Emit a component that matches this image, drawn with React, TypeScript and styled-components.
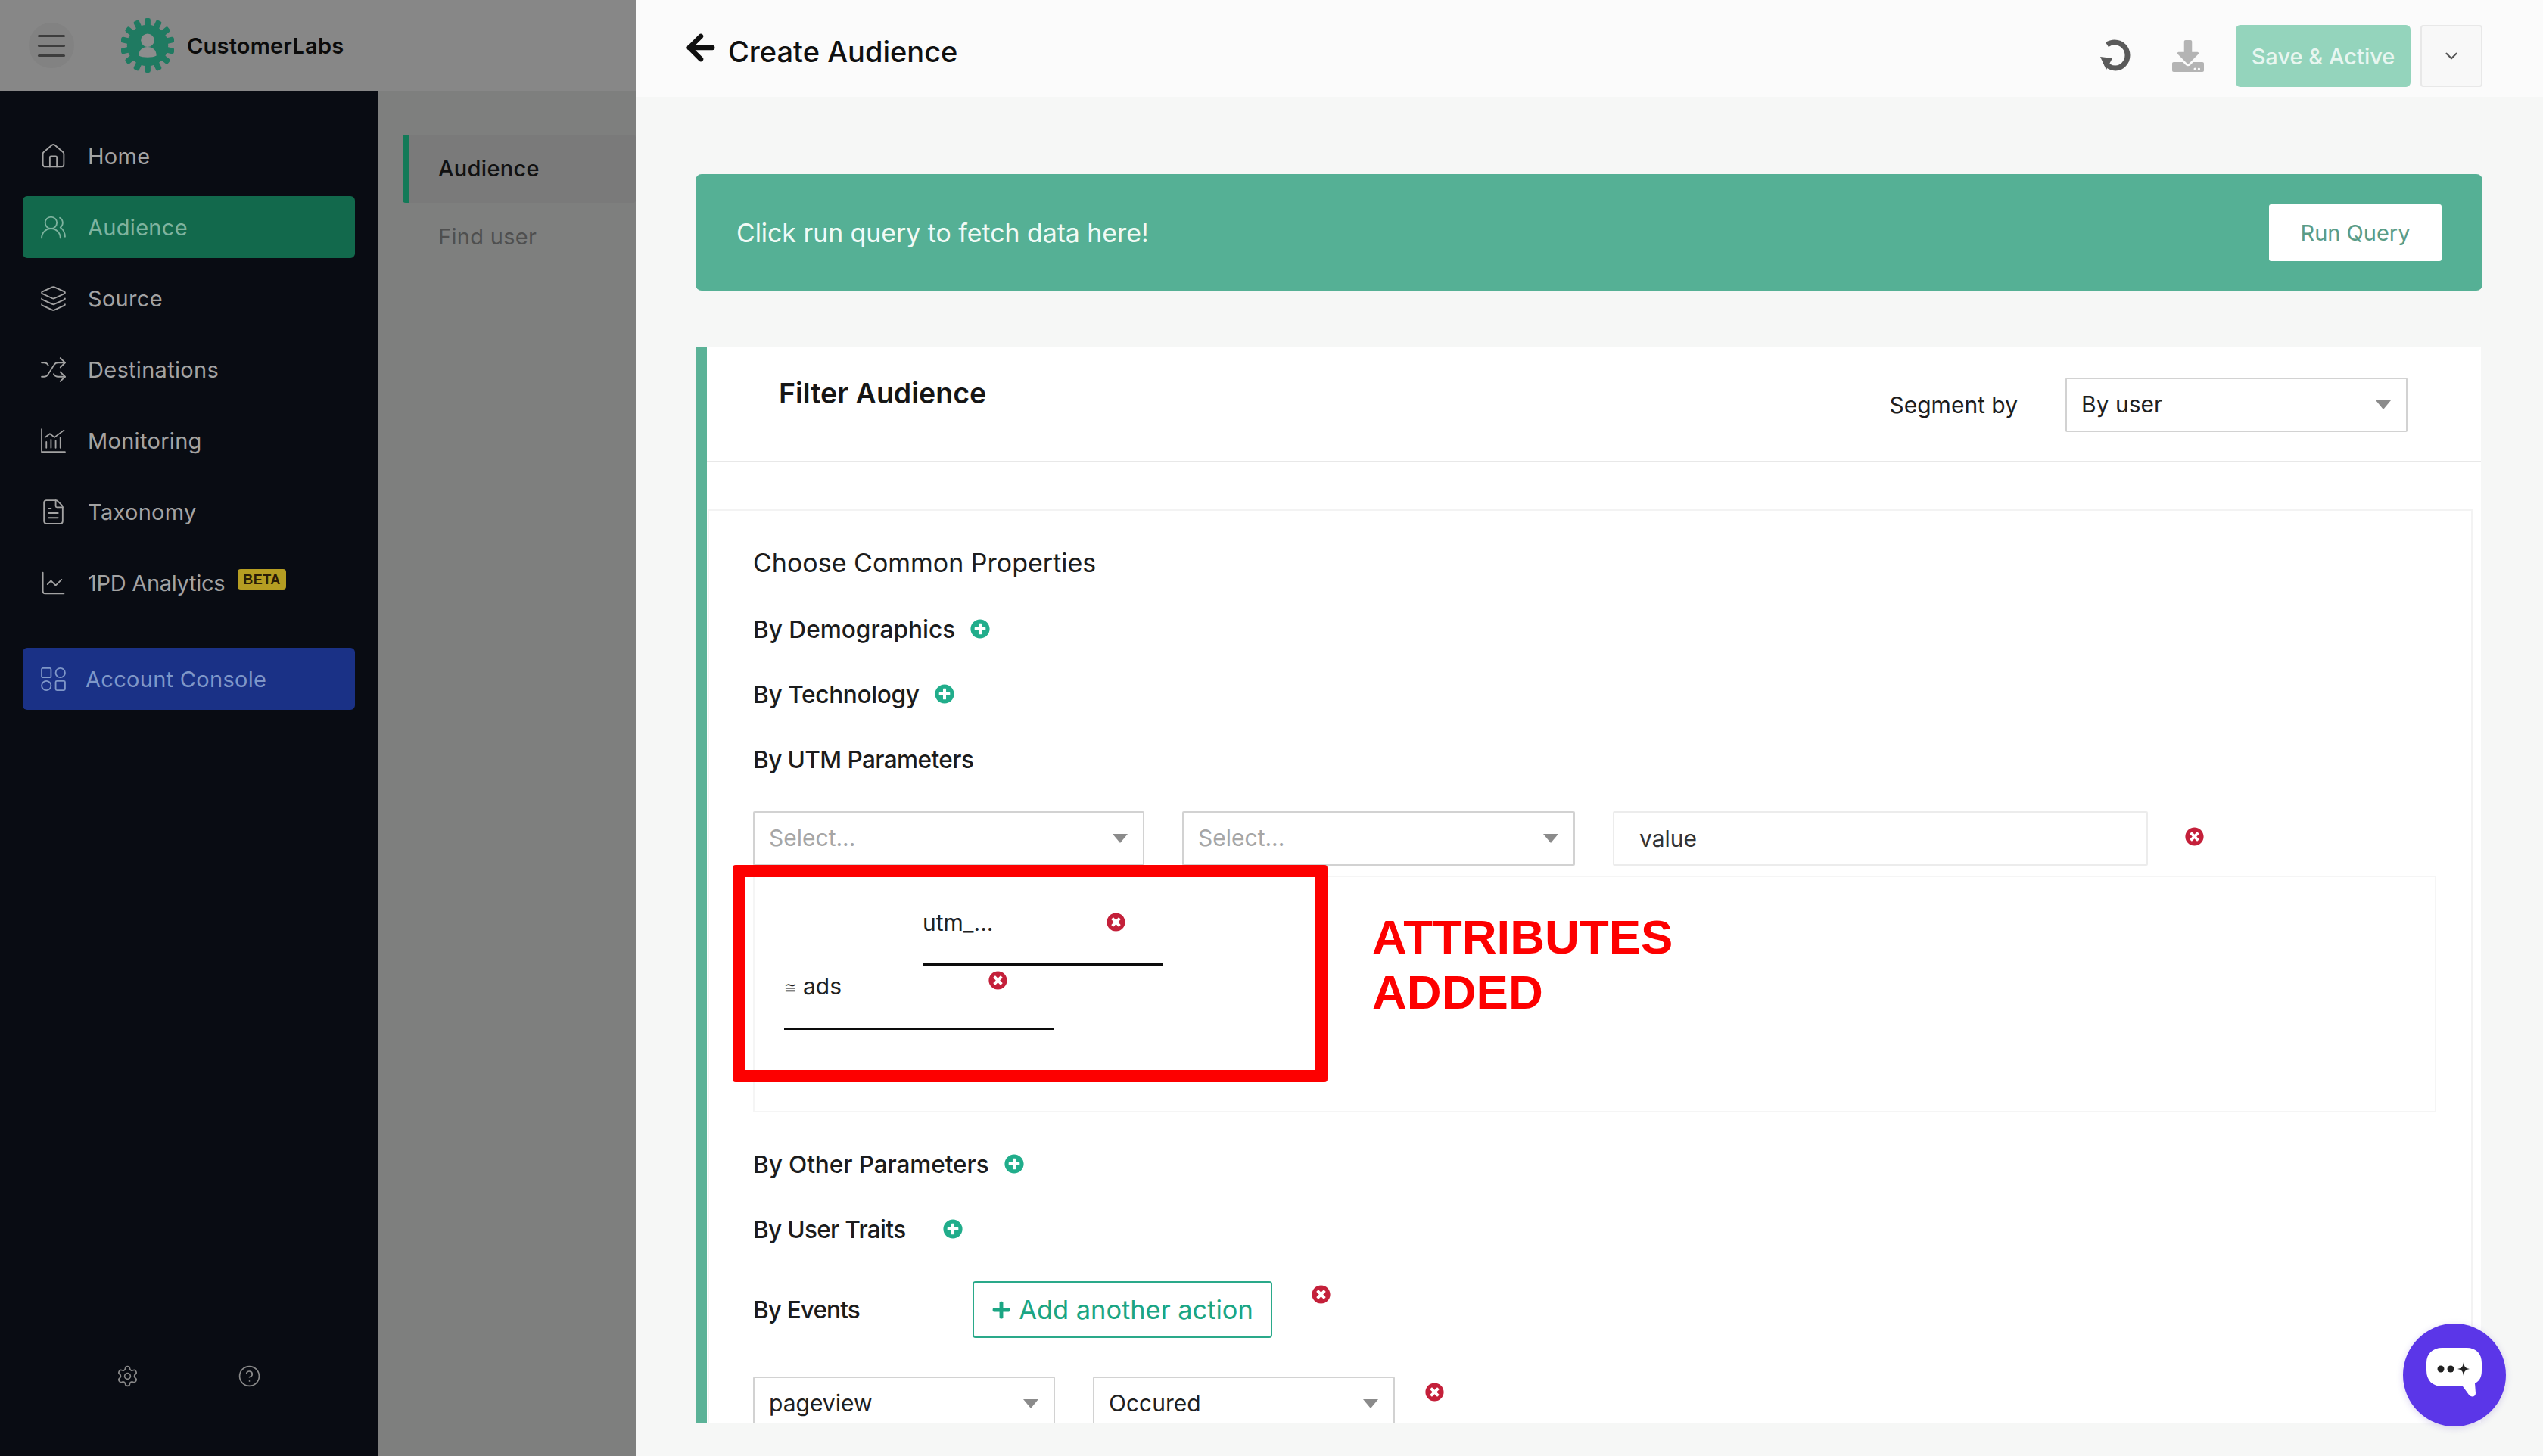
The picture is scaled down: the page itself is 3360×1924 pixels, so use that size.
import React from "react";
import styled, { createGlobalStyle } from "styled-components";
import {
  ArrowLeft,
  ChartLine,
  ChevronDown,
  CircleHelp,
  FileText,
  House,
  Layers,
  Settings,
  Shuffle,
  UsersRound,
} from "lucide-react";
import { FaDownload, FaPlus, FaPlusCircle, FaTimesCircle } from "react-icons/fa";

const GlobalStyle = createGlobalStyle`
  html, body {
    margin: 0;
    padding: 0;
    background: #f6f7f6;
    font-family: "Inter", "Noto Sans", sans-serif;
  }
  * { box-sizing: border-box; }
`;

const Page = styled.div`
  position: relative;
  display: flex;
  width: 3360px;
  height: 1924px;
  overflow: hidden;
`;

const LeftColumn = styled.div`
  display: flex;
  flex-direction: column;
  width: 840px;
  flex: none;
`;

const Brand = styled.div`
  display: flex;
  align-items: center;
  height: 120px;
  background: #878787;
  padding-left: 38px;
`;

const Hamburger = styled.div`
  display: flex;
  flex-direction: column;
  justify-content: center;
  gap: 10px;
  width: 60px;
  height: 60px;
  padding: 0 12px;
  margin-right: 62px;
  border-radius: 50%;
  background: #828282;
  span {
    display: block;
    height: 3px;
    background: #3d3d3d;
    border-radius: 2px;
  }
`;

const BrandName = styled.div`
  margin-left: 17px;
  font-size: 29px;
  font-weight: 600;
  color: #0b0b0b;
  letter-spacing: 0.2px;
`;

const LeftBody = styled.div`
  display: flex;
  flex: 1;
  min-height: 0;
`;

const Sidebar = styled.nav`
  display: flex;
  flex-direction: column;
  width: 500px;
  padding: 45px 31px 90px 30px;
  background: #090c13;
`;

const NavList = styled.div`
  display: flex;
  flex-direction: column;
  gap: 12px;
`;

const NavItem = styled.div<{ $tone?: "green" | "blue"; $topGap?: number }>`
  display: flex;
  align-items: center;
  gap: ${(p) => (p.$tone === "blue" ? 24 : 27)}px;
  height: 82px;
  padding-left: 22px;
  border-radius: 6px;
  margin-top: ${(p) => p.$topGap ?? 0}px;
  font-size: 29px;
  letter-spacing: 0.3px;
  color: ${(p) => (p.$tone === "blue" ? "#7f97c8" : p.$tone === "green" ? "#7fb39f" : "#a3a3a3")};
  background: ${(p) =>
    p.$tone === "blue" ? "#1a3186" : p.$tone === "green" ? "#12694c" : "transparent"};
  svg {
    flex: none;
    width: 37px;
    height: 37px;
    stroke-width: 1.2;
  }
`;

const TightLabel = styled.span`
  letter-spacing: -0.3px;
`;

const BetaBadge = styled.span`
  align-self: flex-start;
  margin: 23px 0 0 -10px;
  padding: 4px 7px 3px;
  border-radius: 4px;
  background: #b59d22;
  color: #2a1c06;
  font-family: "Liberation Sans", Arial, sans-serif;
  font-size: 18px;
  font-weight: 700;
  line-height: 20px;
  letter-spacing: 0.5px;
`;

const SidebarFoot = styled.div`
  display: flex;
  gap: 130px;
  margin-top: auto;
  padding-left: 123px;
  color: #8a8a8a;
  svg {
    width: 31px;
    height: 31px;
    stroke-width: 1.3;
  }
`;

const SubNav = styled.div`
  width: 340px;
  padding-top: 58px;
  background: #7e7f7e;
`;

const SubItem = styled.div<{ $active?: boolean }>`
  display: flex;
  align-items: center;
  height: 90px;
  margin-left: 32px;
  padding: 0 0 2px 39px;
  font-size: 29px;
  font-weight: ${(p) => (p.$active ? 500 : 400)};
  color: ${(p) => (p.$active ? "#111" : "#4f4f4f")};
  letter-spacing: 0.3px;
  background: ${(p) => (p.$active ? "#7a7a7a" : "transparent")};
  border-left: 8px solid ${(p) => (p.$active ? "#137a58" : "transparent")};
  border-radius: ${(p) => (p.$active ? "4px" : "0")};
`;

const Main = styled.main`
  display: flex;
  flex-direction: column;
  flex: 1;
  min-width: 0;
`;

const TopBar = styled.header`
  display: flex;
  align-items: center;
  flex: none;
  height: 128px;
  padding: 8px 80px 0 60px;
  background: #fbfbfb;
`;

const BackTitle = styled.div`
  display: flex;
  align-items: center;
  gap: 10px;
  font-size: 38px;
  font-weight: 500;
  color: #101010;
  svg {
    width: 52px;
    height: 52px;
    stroke-width: 3;
    margin-top: -10px;
  }
`;

const TopActions = styled.div`
  display: flex;
  align-items: center;
  margin-left: auto;
  margin-top: 12px;
`;

const RefreshIcon = styled.svg`
  width: 44px;
  height: 44px;
  margin-right: 53px;
`;

const DownloadIcon = styled(FaDownload)`
  width: 42px;
  height: 42px;
  margin-right: 42px;
  color: #b4b4b4;
`;

const SaveButton = styled.div`
  display: flex;
  align-items: center;
  justify-content: center;
  width: 231px;
  height: 82px;
  border-radius: 6px;
  background: #94d4bc;
  color: #e8f6f0;
  font-size: 29px;
  font-weight: 500;
`;

const CaretButton = styled.div`
  display: flex;
  align-items: center;
  justify-content: center;
  width: 82px;
  height: 82px;
  margin-left: 13px;
  border: 2px solid #e8e8e8;
  border-radius: 4px;
  color: #555;
  background: #f8f8f8;
  svg {
    width: 26px;
    height: 26px;
  }
`;

const Content = styled.div`
  flex: none;
  height: 1752px;
  padding: 102px 80px 0 79px;
  overflow: hidden;
`;

const Banner = styled.div`
  display: flex;
  align-items: center;
  justify-content: space-between;
  height: 154px;
  padding: 0 54px;
  border-radius: 8px;
  background: #55b095;
  color: #f1faf6;
  font-size: 33.8px;
`;

const RunButton = styled.div`
  display: flex;
  align-items: center;
  justify-content: center;
  width: 228px;
  height: 75px;
  border-radius: 3px;
  background: #fff;
  color: #5a9c87;
  font-size: 29px;
`;

const Card = styled.section`
  margin: 75px 2px 0 1px;
  height: 1500px;
  background: #fff;
  border-left: 14px solid #5bb297;
`;

const CardHead = styled.div`
  display: flex;
  height: 152px;
  padding: 40px 97px 0 95px;
  border-bottom: 2px solid #e8e8e8;
`;

const CardTitle = styled.h2`
  margin: 1px 0 0;
  font-size: 37.5px;
  line-height: 40px;
  font-weight: 600;
  color: #161616;
`;

const SegmentBy = styled.div`
  display: flex;
  align-items: center;
  gap: 63px;
  height: 72px;
  margin-left: auto;
  font-size: 30px;
  color: #1d1d1d;
`;

const Select = styled.div<{ $w: number; $muted?: boolean; $h?: number }>`
  position: relative;
  display: flex;
  align-items: center;
  flex: none;
  width: ${(p) => p.$w}px;
  height: ${(p) => p.$h ?? 72}px;
  padding: 0 19px 2px;
  border: 2px solid #d2d2d2;
  border-radius: 2px;
  background: #fff;
  font-size: 30px;
  color: ${(p) => (p.$muted ? "#a6a6a6" : "#1f1f1f")};
  &::after {
    content: "";
    position: absolute;
    right: 20px;
    top: 50%;
    margin-top: -6px;
    border-left: 10px solid transparent;
    border-right: 10px solid transparent;
    border-top: 12px solid #8b8b8b;
  }
`;

const ValueInput = styled.div`
  display: flex;
  align-items: center;
  width: 707px;
  height: 72px;
  padding-left: 33px;
  border: 2px solid #ececec;
  border-radius: 2px;
  font-size: 30px;
  color: #333;
`;

const Properties = styled.div`
  margin: 62px 11px 0 1px;
  height: 1300px;
  padding: 27px 46px 0 58px;
  border: 2px solid #f3f3f3;
  border-bottom: 0;
`;

const SectionTitle = styled.div`
  height: 86px;
  font-size: 34px;
  line-height: 84px;
  color: #1d1d1d;
`;

const GroupRow = styled.div<{ $gap: number; $track?: number }>`
  display: flex;
  align-items: center;
  gap: ${(p) => p.$gap}px;
  height: 86px;
  font-size: 31.6px;
  font-weight: 500;
  letter-spacing: ${(p) => p.$track ?? 0}px;
  color: #1c1c1c;
`;

const PlusIcon = styled(FaPlusCircle)`
  width: 26px;
  height: 26px;
  color: #21ad8b;
`;

const RemoveIcon = styled(FaTimesCircle)`
  flex: none;
  width: 25px;
  height: 25px;
  color: #c4203a;
`;

const FieldRow = styled.div<{ $gap: number; $top: number }>`
  display: flex;
  align-items: flex-start;
  gap: ${(p) => p.$gap}px;
  margin-top: ${(p) => p.$top}px;
`;

const IconNudge = styled.span<{ $top: number; $left: number }>`
  display: block;
  flex: none;
  margin: ${(p) => p.$top}px 0 0 ${(p) => p.$left}px;
  line-height: 0;
`;

const AddedPanel = styled.div`
  position: relative;
  height: 313px;
  margin: 13px 0 25px 0;
  padding-top: 32px;
  border: 2px solid #f5f5f5;
  background: #fff;
`;

const TagField = styled.div<{ $left: number; $w: number; $lift?: number }>`
  display: flex;
  align-items: flex-start;
  width: ${(p) => p.$w}px;
  height: 85px;
  margin-left: ${(p) => p.$left}px;
  border-bottom: 3px solid #0c0c0c;
  font-size: 30px;
  line-height: ${(p) => 56 - (p.$lift ?? 0)}px;
  color: #222;
`;

const TagAffix = styled.span`
  font-size: 20px;
  margin: 2px 8px 0 0;
`;

const RedBox = styled.div`
  position: absolute;
  left: -29px;
  top: -16px;
  width: 786px;
  height: 287px;
  border: 16px solid #fd0000;
  border-radius: 4px;
`;

const RedNote = styled.div`
  position: absolute;
  left: 816px;
  top: 43px;
  font-family: "Liberation Sans", Arial, sans-serif;
  font-size: 63.5px;
  line-height: 73px;
  font-weight: 700;
  color: #fd0000;
`;

const EventsRow = styled.div`
  display: flex;
  align-items: flex-start;
  margin-top: 26px;
  height: 75px;
`;

const EventsLabel = styled.div`
  width: 290px;
  font-size: 31.6px;
  line-height: 75px;
  font-weight: 500;
  letter-spacing: -0.9px;
  color: #1c1c1c;
`;

const AddButton = styled.div`
  display: flex;
  align-items: center;
  justify-content: center;
  gap: 10px;
  width: 396px;
  height: 75px;
  border: 2px solid #2aa98a;
  border-radius: 4px;
  color: #1ba583;
  font-size: 34.4px;
  svg {
    width: 26px;
    height: 26px;
  }
`;

const ChatBubble = styled.div`
  position: absolute;
  left: 3175px;
  top: 1749px;
  width: 136px;
  height: 136px;
  border-radius: 50%;
  background: #5b36e8;
  box-shadow: 0 2px 10px rgba(60, 30, 180, 0.18);
  svg {
    display: block;
  }
`;

const GearLogo = () => (
  <svg width="70" height="74" viewBox="-36 -38 72 76">
    {Array.from({ length: 14 }, (_, i) => (
      <rect key={i} x="-4" y="-37" width="8" height="14" rx="2.5" fill="#1f7a61" transform={`rotate(${(i * 360) / 14})`} />
    ))}
    <circle r="28" fill="#1f7a61" />
    <circle cx="0" cy="-7" r="9" fill="#8d8d8d" />
    <path d="M-12 14c0-8 5-12 12-12s12 4 12 12c-5 3-19 3-24 0z" fill="#8d8d8d" />
  </svg>
);

const MonitorIcon = () => (
  <svg viewBox="0 0 24 24" fill="none" stroke="currentColor" strokeLinecap="round" strokeLinejoin="round">
    <path d="M2 2v19.500h20" />
    <path d="M6 18v-5M10 18v-7M14 18v-6M18 18V9" />
    <path d="M5 9l4-3 4 3 8-6" />
  </svg>
);

const ConsoleIcon = () => (
  <svg viewBox="0 0 24 24" fill="none" stroke="currentColor">
    <rect x="2" y="2.500" width="8" height="8" rx="1" />
    <circle cx="18" cy="6.500" r="4" />
    <circle cx="6" cy="17.500" r="4" />
    <rect x="14" y="13.500" width="8" height="8" rx="1" />
  </svg>
);

const ChatGlyph = () => (
  <svg width="136" height="136" viewBox="0 0 136 136">
    <path
      d="M52 32h32c13 0 20 8 20 20v10c0 9-3 14-9 17l1 13c0 5-6 6-9 2l-8-11H52c-13 0-21-8-21-21V52c0-12 8-20 21-20z"
      fill="#fff"
    />
    <circle cx="50" cy="60" r="4.500" fill="#222" />
    <circle cx="63" cy="60" r="4.500" fill="#222" />
    <path d="M80 51c1 6 2 8 8 9-6 1-7 3-8 9-1-6-2-8-8-9 6-1 7-3 8-9z" fill="#222" />
  </svg>
);

const navItems: { label: string; icon: React.ReactNode; tone?: "green" }[] = [
  { label: "Home", icon: <House /> },
  { label: "Audience", icon: <UsersRound />, tone: "green" },
  { label: "Source", icon: <Layers /> },
  { label: "Destinations", icon: <Shuffle /> },
  { label: "Monitoring", icon: <MonitorIcon /> },
  { label: "Taxonomy", icon: <FileText /> },
];

export default function App() {
  return (
    <Page>
      <GlobalStyle />
      <LeftColumn>
        <Brand>
          <Hamburger>
            <span />
            <span />
            <span />
          </Hamburger>
          <GearLogo />
          <BrandName>CustomerLabs</BrandName>
        </Brand>
        <LeftBody>
          <Sidebar>
            <NavList>
              {navItems.map((item) => (
                <NavItem key={item.label} $tone={item.tone}>
                  {item.icon}
                  {item.label}
                </NavItem>
              ))}
              <NavItem>
                <ChartLine />
                <TightLabel>1PD Analytics</TightLabel>
                <BetaBadge>BETA</BetaBadge>
              </NavItem>
            </NavList>
            <NavItem $tone="blue" $topGap={45}>
              <ConsoleIcon />
              Account Console
            </NavItem>
            <SidebarFoot>
              <Settings />
              <CircleHelp />
            </SidebarFoot>
          </Sidebar>
          <SubNav>
            <SubItem $active>Audience</SubItem>
            <SubItem>Find user</SubItem>
          </SubNav>
        </LeftBody>
      </LeftColumn>

      <Main>
        <TopBar>
          <BackTitle>
            <ArrowLeft />
            Create Audience
          </BackTitle>
          <TopActions>
            <RefreshIcon viewBox="0 0 44 44" fill="none">
              <path d="M11 7c3-2 7-3 10-3 10 0 17 8 17 17s-7 17-16 17c-6 0-11-3-13-8" stroke="#5a5a5a" strokeWidth="7" />
              <path d="M2 23l16 2-8 15z" fill="#5a5a5a" />
            </RefreshIcon>
            <DownloadIcon />
            <SaveButton>Save &amp; Active</SaveButton>
            <CaretButton>
              <ChevronDown />
            </CaretButton>
          </TopActions>
        </TopBar>

        <Content>
          <Banner>
            Click run query to fetch data here!
            <RunButton>Run Query</RunButton>
          </Banner>

          <Card>
            <CardHead>
              <CardTitle>Filter Audience</CardTitle>
              <SegmentBy>
                Segment by
                <Select $w={452}>By user</Select>
              </SegmentBy>
            </CardHead>

            <Properties>
              <SectionTitle>Choose Common Properties</SectionTitle>
              <GroupRow $gap={20}>
                By Demographics
                <PlusIcon />
              </GroupRow>
              <GroupRow $gap={20} $track={-0.35}>
                By Technology
                <PlusIcon />
              </GroupRow>
              <GroupRow $gap={20} $track={-0.6}>By UTM Parameters</GroupRow>

              <FieldRow $gap={50} $top={26}>
                <Select $w={517} $muted>Select...</Select>
                <Select $w={519} $muted>Select...</Select>
                <ValueInput>value</ValueInput>
                <IconNudge $top={21} $left={-1}>
                  <RemoveIcon />
                </IconNudge>
              </FieldRow>

              <AddedPanel>
                <TagField $left={222} $w={317}>
                  utm_...
                  <IconNudge $top={15} $left={150}>
                    <RemoveIcon />
                  </IconNudge>
                </TagField>
                <TagField $left={39} $w={357} $lift={2}>
                  <TagAffix>≅</TagAffix>
                  ads
                  <IconNudge $top={7} $left={194}>
                    <RemoveIcon />
                  </IconNudge>
                </TagField>
                <RedBox />
                <RedNote>
                  ATTRIBUTES
                  <br />
                  ADDED
                </RedNote>
              </AddedPanel>

              <GroupRow $gap={20} $track={-0.1}>
                By Other Parameters
                <PlusIcon />
              </GroupRow>
              <GroupRow $gap={50} $track={-0.7}>
                By User Traits
                <PlusIcon />
              </GroupRow>

              <EventsRow>
                <EventsLabel>By Events</EventsLabel>
                <AddButton>
                  <FaPlus />
                  Add another action
                </AddButton>
                <IconNudge $top={5} $left={52}>
                  <RemoveIcon />
                </IconNudge>
              </EventsRow>

              <FieldRow $gap={50} $top={51}>
                <Select $w={399}>pageview</Select>
                <Select $w={399}>Occured</Select>
                <IconNudge $top={8} $left={-10}>
                  <RemoveIcon />
                </IconNudge>
              </FieldRow>
            </Properties>
          </Card>
        </Content>
      </Main>

      <ChatBubble>
        <ChatGlyph />
      </ChatBubble>
    </Page>
  );
}
